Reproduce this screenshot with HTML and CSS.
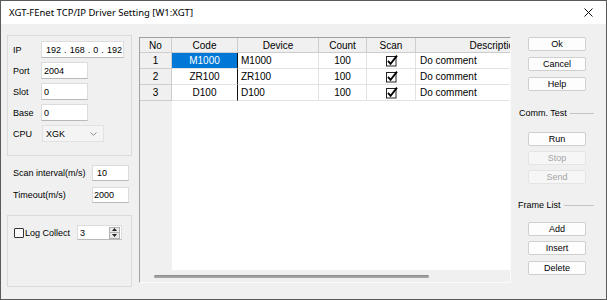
FILE: index.html
```html
<!DOCTYPE html>
<html>
<head>
<meta charset="utf-8">
<link rel="stylesheet" href="styles.css">
</head>
<body>
<div class="win">
  <div class="titlebar">
    <span class="title">XGT-FEnet TCP/IP Driver Setting [W1:XGT]</span>
    <svg class="close" width="9" height="9" viewBox="0 0 9 9"><path d="M0.5 0.5L8.5 8.5M8.5 0.5L0.5 8.5" stroke="#111" stroke-width="1" fill="none"/></svg>
  </div>
  <div class="main">
    <div class="left">
      <div class="group conn">
        <div class="frow"><span class="lbl">IP</span>
          <div class="inp ip"><span>192</span><span>.</span><span>168</span><span>.</span><span>0</span><span>.</span><span>192</span></div>
        </div>
        <div class="frow"><span class="lbl">Port</span><div class="inp w47">2004</div></div>
        <div class="frow"><span class="lbl">Slot</span><div class="inp w47">0</div></div>
        <div class="frow"><span class="lbl">Base</span><div class="inp w47">0</div></div>
        <div class="frow"><span class="lbl">CPU</span>
          <div class="sel"><span class="seltxt">XGK</span><svg width="7" height="4" viewBox="0 0 7 4"><path d="M0.5 0.5L3.5 3.3L6.5 0.5" stroke="#8a8a8a" stroke-width="1" fill="none"/></svg></div>
        </div>
      </div>
      <div class="scan">
        <div class="srow"><span class="slbl">Scan interval(m/s)</span><div class="inp w37 pad4">10</div></div>
        <div class="srow"><span class="slbl">Timeout(m/s)</span><div class="inp w37 pad1">2000</div></div>
      </div>
      <div class="group log">
        <div class="logrow">
          <span class="chk"></span>
          <span class="loglbl">Log Collect</span>
          <div class="spin">
            <span class="spintxt">3</span>
            <div class="spinbtn">
              <div class="sb"><svg width="5" height="3" viewBox="0 0 5 3"><path d="M0 3L2.5 0L5 3Z" fill="#222"/></svg></div>
              <div class="sb"><svg width="5" height="3" viewBox="0 0 5 3"><path d="M0 0L2.5 3L5 0Z" fill="#222"/></svg></div>
            </div>
          </div>
        </div>
      </div>
    </div>

    <div class="grid">
      <div class="gbody">
        <div class="row hrow">
          <div class="c no">No</div>
          <div class="c code">Code</div>
          <div class="c dev">Device</div>
          <div class="c cnt">Count</div>
          <div class="c scn">Scan</div>
          <div class="c desc">Description</div>
        </div>
        <div class="row drow">
          <div class="c no">1</div>
          <div class="c code sel1">M1000</div>
          <div class="c dev">M1000</div>
          <div class="c cnt">100</div>
          <div class="c scn"><svg width="13" height="12" viewBox="0 0 13 12"><rect x="1.5" y="1.5" width="9.5" height="9.5" fill="#fff" stroke="#222" stroke-width="1"/><path d="M3 5.8L5.6 8.8L12 0.6" fill="none" stroke="#000" stroke-width="1.8"/></svg></div>
          <div class="c desc">Do comment</div>
        </div>
        <div class="row drow">
          <div class="c no">2</div>
          <div class="c code">ZR100</div>
          <div class="c dev">ZR100</div>
          <div class="c cnt">100</div>
          <div class="c scn"><svg width="13" height="12" viewBox="0 0 13 12"><rect x="1.5" y="1.5" width="9.5" height="9.5" fill="#fff" stroke="#222" stroke-width="1"/><path d="M3 5.8L5.6 8.8L12 0.6" fill="none" stroke="#000" stroke-width="1.8"/></svg></div>
          <div class="c desc">Do comment</div>
        </div>
        <div class="row drow">
          <div class="c no">3</div>
          <div class="c code">D100</div>
          <div class="c dev">D100</div>
          <div class="c cnt">100</div>
          <div class="c scn"><svg width="13" height="12" viewBox="0 0 13 12"><rect x="1.5" y="1.5" width="9.5" height="9.5" fill="#fff" stroke="#222" stroke-width="1"/><path d="M3 5.8L5.6 8.8L12 0.6" fill="none" stroke="#000" stroke-width="1.8"/></svg></div>
          <div class="c desc">Do comment</div>
        </div>
      </div>
      <div class="hscroll"><div class="thumb"></div></div>
    </div>

    <div class="right">
      <div class="btn">Ok</div>
      <div class="btn g6">Cancel</div>
      <div class="btn g6">Help</div>
      <div class="sect s1">Comm. Test</div>
      <div class="btn run">Run</div>
      <div class="btn dis g5">Stop</div>
      <div class="btn dis g5">Send</div>
      <div class="sect s2">Frame List</div>
      <div class="btn add">Add</div>
      <div class="btn g5">Insert</div>
      <div class="btn g6">Delete</div>
    </div>
  </div>
</div>
</body>
</html>
```

FILE: styles.css
```css
* { box-sizing: border-box; }
html, body { margin: 0; padding: 0; }
body {
  width: 607px; height: 300px; overflow: hidden;
  font-family: "Liberation Sans", Arial, sans-serif;
  font-size: 9px; color: #000;
}
.win {
  width: 607px; height: 300px;
  border: 1px solid #5a5a5a;
  background: #f0f0f0;
  display: flex; flex-direction: column;
}
.titlebar {
  height: 23px; flex: none;
  background: #fff;
  display: flex; align-items: center;
  padding: 0 13px 0 8px;
}
.title { flex: 1; font-family: "Noto Sans", sans-serif; font-size: 9.5px; color: #000; }
.close { display: block; }
.main { flex: 1; display: flex; min-height: 0; }

/* left */
.left { width: 138px; flex: none; padding: 11px 0 0 6px; display: flex; flex-direction: column; }
.group { width: 125px; border: 1px solid #dadada; }
.conn { height: 121px; padding: 5px 0 0 5px; display: flex; flex-direction: column; gap: 4px; }
.frow { height: 17px; display: flex; align-items: center; }
.lbl { width: 28px; }
.inp {
  height: 17px; background: #fff;
  border: 1px solid #dcdcdc; border-bottom-color: #b9b9b9;
  display: flex; align-items: center; padding-left: 2px;
}
.ip { width: 83px; justify-content: space-between; padding: 0 1px 0 4px; }
.w47 { width: 47px; }
.w37 { width: 37px; height: 16px; }
.pad4 { padding-left: 4px; }
.pad1 { padding-left: 1px; }
.sel {
  width: 62px; height: 17px; margin-left: 1px;
  background: #f4f4f4; border: 1px solid #e2e2e2;
  display: flex; align-items: center; justify-content: space-between;
  padding: 0 6px 0 3px;
}
.scan { margin-top: 9px; display: flex; flex-direction: column; gap: 6px; padding-left: 6px; }
.srow { height: 16px; display: flex; align-items: center; }
.slbl { width: 79px; }
.log { height: 72px; margin-top: 12px; padding: 9px 0 0 5px; }
.logrow { display: flex; align-items: center; height: 15px; }
.chk { width: 10px; height: 10px; border: 1px solid #333; border-radius: 1px; background: #fafafa; margin-left: 1px; }
.loglbl { margin-left: 1px; width: 52px; }
.spin {
  width: 45px; height: 15px; background: #fff;
  border: 1px solid #dcdcdc; border-bottom-color: #b9b9b9;
  display: flex; align-items: center; justify-content: space-between;
  padding: 0 1px 0 2px;
}
.spinbtn { width: 11px; height: 12px; display: flex; flex-direction: column; border: 1px solid #b0b0b0; background: #e9e9e9; }
.sb { flex: 1; display: flex; align-items: center; justify-content: center; }
.sb + .sb { border-top: 1px solid #b0b0b0; }
.sb svg { display: block; }

/* grid */
.grid {
  width: 372px; height: 246px; flex: none; margin-top: 13px;
  border: 1px solid; border-color: #a0a0a0 #fbfbfb #fbfbfb #a0a0a0;
  display: flex; flex-direction: column;
}
.gbody {
  flex: 1; overflow: hidden; min-height: 0;
  background: linear-gradient(to right, #f0f0f0 32px, #fff 32px);
  font-size: 10px;
}
.row { display: flex; width: 440px; }
.hrow { height: 15px; }
.drow { height: 16px; }
.c {
  flex: none; display: flex; align-items: center; justify-content: center;
  border-right: 1px solid #e2e2e2; border-bottom: 1px solid #e2e2e2;
  white-space: nowrap; overflow: hidden; background: #fff;
}
.hrow .c { background: #f0f0f0; border-color: #cdcdcd; }
.drow .no { background: #f0f0f0; border-color: #cdcdcd; }
.no { width: 32px; }
.code { width: 66px; }
.drow .code { border-right: 1px solid #111; }
.dev { width: 81px; }
.drow .dev { justify-content: flex-start; padding-left: 3px; }
.cnt { width: 48px; }
.scn { width: 49px; }
.scn svg { display: block; margin-left: 1px; }
.desc { width: 158px; }
.drow .desc { justify-content: flex-start; padding-left: 4px; }
.sel1 { background: #0078d7 !important; color: #fff; }
.hscroll { height: 12px; flex: none; background: #f0f0f0; padding: 5px 0 0 14px; }
.thumb { width: 275px; height: 3px; background: #a2a2a2; border-radius: 2px; border-top: 1px solid #8e8e8e; }

/* right */
.right { flex: 1; display: flex; flex-direction: column; padding-top: 13px; }
.btn {
  width: 58px; height: 14px; margin-left: 17px;
  background: #fdfdfd; border: 1px solid #cfcfcf; border-radius: 2px;
  display: flex; align-items: center; justify-content: center;
}
.g6 { margin-top: 6px; }
.g5 { margin-top: 5px; }
.dis { color: #a5a5a5; border-color: #e4e4e4; background: #f6f6f6; }
.sect { height: 14px; display: flex; align-items: center; margin-left: 8px; margin-right: 12px; }
.sect::after { content: ""; flex: 1; height: 1px; background: #c4c4c4; margin-left: 3px; }
.s1 { margin-top: 15px; }
.run { margin-top: 12px; }
.s2 { margin-top: 14px; margin-left: 7px; }
.add { margin-top: 10px; }
```
